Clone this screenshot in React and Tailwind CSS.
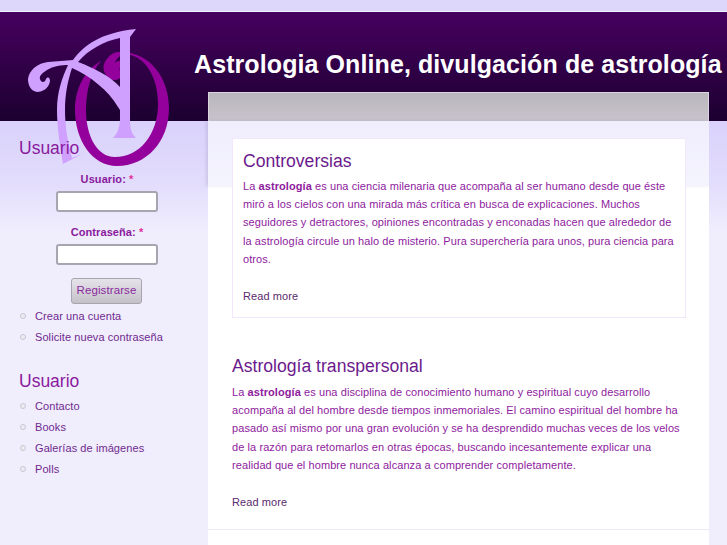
import React from "react";

const FONT = "font-['Liberation_Sans',Arial,sans-serif]";

function Logo() {
  return (
    <svg className="absolute left-0 top-0" width="180" height="175" viewBox="0 0 180 175">
      {/* O with its curl */}
      <path
        fill="#93009c"
        fillRule="evenodd"
        d="M117 52C150 50 169 78 169 108C169 142 146 166 117 166C92 166 75 140 75 110C75 88 85 70 101 61C91 72 86 90 86 110C86 136 97 157 115 157C140 157 158 134 158 104C158 78 146 55 124 54C118 56 116 60 115 63C118 60 122 60 121 64C120 68 118 70 121 71L124 69C124 75 120 81 113 80C106 78 102 70 104 64C107 57 112 53 117 52Z"
      />
      {/* A */}
      <path
        fill="#d0a0ff"
        d="M136 29L130 37V118C130 128 131 133 136 138H113C118 133 120 126 120 118V110L118 107C108 90 90 76 72 68C68 80 65 94 65 110C65 128 68 142 72 158L82 154L63 164C60 145 57 128 57 110C57 92 62 78 68 65C62 65 53 66 47 70C42 73 39 76 40 79C41 83 45 83 46 79C48 76 50 78 50 81C49 88 43 92 37 92C30 91 28 84 28 79C29 70 38 63 48 62C56 61 66 61 73 60C84 45 100 33 136 29ZM120 38C104 41 88 50 78 62C94 68 110 76 120 87Z"
      />
    </svg>
  );
}

function SideList({ items }) {
  return (
    <ul className="flex flex-col gap-[7px] pl-[20px] text-[11px] leading-[14px] tracking-[0.08px] text-[#6f2a8e]">
      {items.map((it) => (
        <li key={it} className="flex items-center gap-[9px]">
          <span className="h-[6px] w-[6px] rounded-full border border-[#c9c6d2] bg-[#ecebf2]" />
          {it}
        </li>
      ))}
    </ul>
  );
}

function Field({ label }) {
  return (
    <div className="flex flex-col items-center">
      <label className="text-[11px] font-bold leading-[14px] tracking-[0.08px] text-[#8a1a9e]">
        {label}: <span className="text-[#e0309a]">*</span>
      </label>
      <input className="mt-[5px] h-[21px] w-[102px] rounded-[3px] border-2 border-[#a8a4b0] bg-white" />
    </div>
  );
}

function Teaser({ title, children, boxed }) {
  return (
    <article
      className={
        boxed
          ? "mr-[-1px] h-[180px] border border-[#f3e8fb] bg-white px-[10px] pt-[11px]"
          : "h-[172px] pt-[37px]"
      }
    >
      <h2 className="text-[17.6px] leading-[22px] text-[#6b1a8c]">{title}</h2>
      <p className={`${boxed ? "mt-[5px]" : "mt-[6px]"} text-[11px] leading-[18.2px] tracking-[0.08px] text-[#8e1a9e]`}>
        {children}
      </p>
      <p className="mt-[19px] text-[11px] leading-[18px] tracking-[0.08px] text-[#5a2a6e]">Read more</p>
    </article>
  );
}

export default function App() {
  return (
    <div className={`${FONT} relative h-[545px] w-[727px] overflow-hidden bg-[#f0edfd]`}>
      <div className="h-[11px] bg-[#dcd7fb]" />
      <div className="h-px bg-[#f2f0fd]" />
      <header className="h-[109px] bg-gradient-to-b from-[#47005f] to-[#1c0030] pl-[194px] pt-[36px]">
        <h1 className="whitespace-nowrap text-[25px] font-bold leading-[32px] tracking-[0.09px] text-white">
          Astrologia Online, divulgación de astrología
        </h1>
      </header>

      <div className="flex bg-[linear-gradient(#d9d1fb_0px,#e2dcfc_60px,#f0edfd_110px)]">
        {/* sidebar text sits on top of the logo's tail */}
        <aside className="relative z-10 w-[208px] shrink-0 pt-[15px]">
          <h3 className="pl-[19px] text-[17.5px] leading-[24px] text-[#8a1a9e]">Usuario</h3>
          <form className="mt-[12px] flex flex-col gap-[13px] pl-[6px]">
            <Field label="Usuario" />
            <Field label="Contraseña" />
            <button
              type="button"
              className="ml-[65px] h-[26px] w-[71px] self-start rounded-[3px] border border-[#a8a4b0] bg-gradient-to-b from-[#e6e4ea] to-[#c4c2c8] text-[11.5px] tracking-[0.1px] text-[#8a2a9e]"
            >
              Registrarse
            </button>
          </form>
          <div className="mt-[5px]">
            <SideList items={["Crear una cuenta", "Solicite nueva contraseña"]} />
          </div>
          <h3 className="mt-[25px] pl-[19px] text-[17.5px] leading-[24px] text-[#8a1a9e]">Usuario</h3>
          <div className="mt-[6px]">
            <SideList items={["Contacto", "Books", "Galerías de imágenes", "Polls"]} />
          </div>
        </aside>

        <main className="-mt-[29px] h-[453px] w-[501px] shrink-0 bg-white">
          <div className="h-[29px] border-l border-r border-t border-[#d8d5de] bg-gradient-to-b from-[#b9b6bd] to-[#c8c3cc]" />
          <div className="h-[65px] bg-gradient-to-b from-[#f0edfd] to-[#f4f4fe] shadow-[-2px_0_3px_rgba(120,110,150,0.2)]" />
          <div className="-mt-[48px] px-[24px]">
            <Teaser title="Controversias" boxed>
              La <b>astrología</b> es una ciencia milenaria que acompaña al ser humano desde que éste miró a los cielos
              con una mirada más crítica en busca de explicaciones. Muchos seguidores y detractores, opiniones
              encontradas y enconadas hacen que alrededor de la astrología circule un halo de misterio. Pura
              superchería para unos, pura ciencia para otros.
            </Teaser>
            <Teaser title="Astrología transpersonal">
              La <b>astrología</b> es una disciplina de conocimiento humano y espiritual cuyo desarrollo acompaña al
              del hombre desde tiempos inmemoriales. El camino espiritual del hombre ha pasado así mismo por una gran
              evolución y se ha desprendido muchas veces de los velos de la razón para retomarlos en otras épocas,
              buscando incesantemente explicar una realidad que el hombre nunca alcanza a comprender completamente.
            </Teaser>
          </div>
          <div className="mt-[39px] h-px bg-[#eee8f8]" />
        </main>
      </div>
      <Logo />
    </div>
  );
}
